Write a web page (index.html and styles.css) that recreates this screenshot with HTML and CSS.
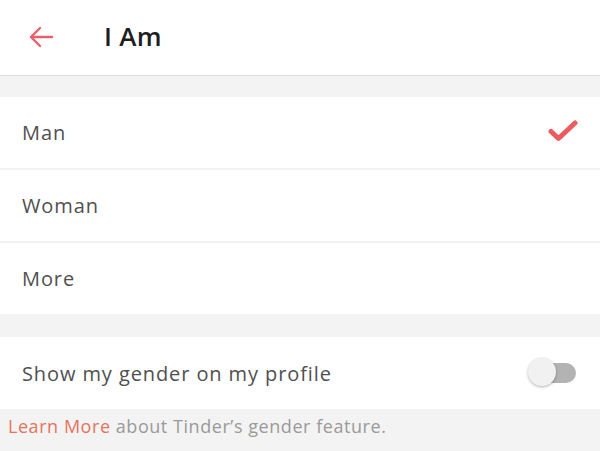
FILE: index.html
```html
<!DOCTYPE html>
<html>
<head>
<meta charset="utf-8">
<link rel="stylesheet" href="styles.css">
</head>
<body>
<div class="app">
  <header class="topbar">
    <svg class="back" width="26" height="22" viewBox="0 0 26 22"><path d="M24 11H3M12 2L3 11l9 9" fill="none" stroke="#e9606b" stroke-width="2.4" stroke-linecap="round" stroke-linejoin="round"/></svg>
    <h1 class="title">I Am</h1>
  </header>
  <div class="gap gap-top"></div>
  <ul class="options">
    <li class="row">Man
      <svg class="check" width="30" height="22" viewBox="0 0 30 22"><path d="M3 11.5l7.5 7L27 3" fill="none" stroke="#ec5b5d" stroke-width="5" stroke-linecap="round" stroke-linejoin="round"/></svg>
    </li>
    <li class="row">Woman</li>
    <li class="row">More</li>
  </ul>
  <div class="gap gap-mid"></div>
  <div class="row toggle-row">Show my gender on my profile
    <span class="switch"><span class="knob"></span></span>
  </div>
  <p class="footer"><span class="link">Learn More</span> about Tinder’s gender feature.</p>
</div>
</body>
</html>
```
FILE: styles.css
```css
* { box-sizing: border-box; }
html, body { margin: 0; padding: 0; background: #f3f3f3; }
body { font-family: "Open Sans", "Lato", sans-serif; width: 600px; height: 451px; overflow: hidden; }
.app { display: flex; flex-direction: column; }
.topbar {
  height: 76px; background: #fff; display: flex; align-items: center;
  border-bottom: 1px solid #dcdcdc; padding-left: 28px;
}
.back { margin-top: -2px; }
.title { margin: -4px 0 0 50px; font-size: 26px; font-weight: 600; color: #1e1e1e; letter-spacing: 0.3px; }
.gap-top { height: 21px; }
.gap-mid { height: 23px; }
.options { list-style: none; margin: 0; padding: 0; }
.row {
  height: 72px; background: #fff; display: flex; align-items: center; justify-content: space-between;
  padding: 0 22px 0 22px; font-size: 20px; color: #505050; letter-spacing: 0.9px;
}
.options .row + .row { border-top: 2px solid #f2f2f2; height: 73px; }
.options .row:first-child { height: 71px; }
.check { margin-right: 0; margin-top: -4px; }
.toggle-row { height: 72px; }
.switch { position: relative; width: 46px; height: 20px; border-radius: 10px; background: #b3b3b3; margin-right: 2px; }
.knob {
  position: absolute; left: -2px; top: -5px; width: 28px; height: 28px; border-radius: 50%;
  background: #f1f1f1; box-shadow: 0 1px 3px rgba(0,0,0,0.3);
}
.footer { margin: 0; height: 41px; padding: 5px 0 0 8px; font-size: 18px; color: #9a9a9a; letter-spacing: 0.55px; }
.link { color: #e4745e; }
```
